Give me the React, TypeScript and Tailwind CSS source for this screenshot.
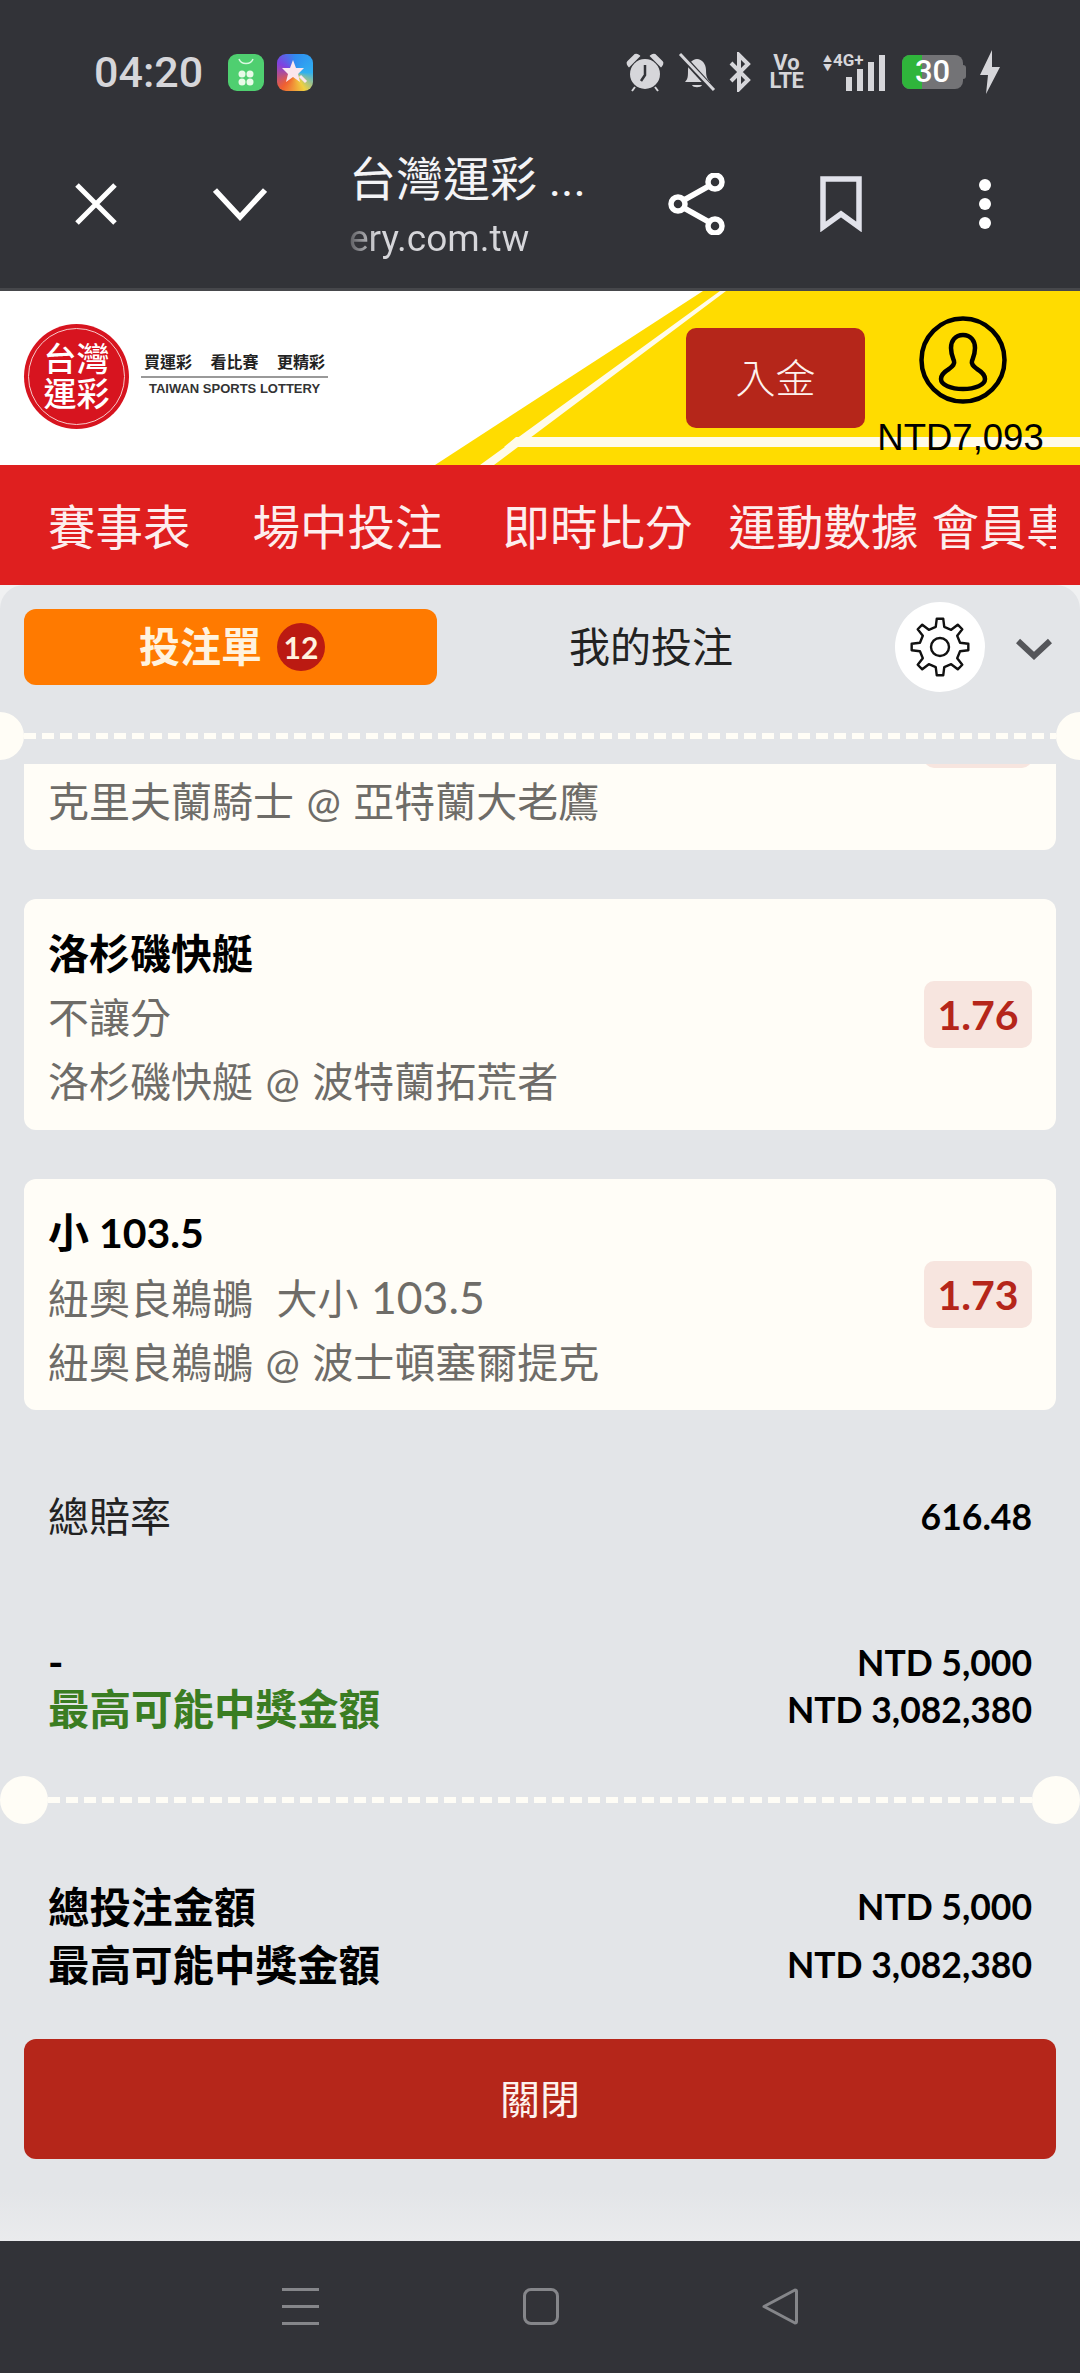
const bets = [
  { title: '克里夫蘭騎士', market: '不讓分', line: '', teams: '克里夫蘭騎士 @ 亞特蘭大老鷹', odds: '1.80' },
  { title: '洛杉磯快艇', market: '不讓分', line: '', teams: '洛杉磯快艇 @ 波特蘭拓荒者', odds: '1.76' },
  { title: '小 103.5', market: '紐奧良鵜鶘 大小', line: '103.5', teams: '紐奧良鵜鶘 @ 波士頓塞爾提克', odds: '1.73' }
];

// 8 teeth, round joins do the rest
const gearPath =
  Array.from({ length: 8 }, (_, i) =>
    [
      [i * 45 - 12, 20.5],
      [i * 45 - 6.5, 28.5],
      [i * 45 + 6.5, 28.5],
      [i * 45 + 12, 20.5]
    ]
      .map(([a, r]) => `${(r * Math.sin((a * Math.PI) / 180)).toFixed(2)} ${(-r * Math.cos((a * Math.PI) / 180)).toFixed(2)}`)
      .join(' L ')
  )
    .map((part, i) => (i === 0 ? `M ${part}` : `L ${part}`))
    .join(' ') + ' Z';

function StatusIcons() {
  return (
    <div className="ml-auto flex items-center text-[#d6d6da]">
      <svg width="38" height="40" viewBox="0 0 38 40">
        <circle cx="19" cy="22" r="15" fill="#d6d6da" />
        <path d="M19 13v10l-4 6" fill="none" stroke="#323338" strokeWidth="2.5" />
        <path d="M2 10 9 3c2-1 3 0 4 1L3 14c-1-1-2-3-1-4ZM36 10l-7-7c-2-1-3 0-4 1l10 10c1-1 2-3 1-4ZM9 35l-3 4M29 35l3 4" fill="#d6d6da" stroke="#d6d6da" strokeWidth="2" />
      </svg>
      <svg width="38" height="40" viewBox="0 0 38 40" className="ml-[14px]">
        <path d="M7 30c3-3 3-6 3-12 0-6 4-11 9-11s9 5 9 11c0 6 1 9 4 12Z" fill="#d6d6da" />
        <path d="M14 33c1 3 9 3 10 0Z" fill="#d6d6da" />
        <path d="M3 3 35 38" stroke="#323338" strokeWidth="6" />
        <path d="M2 2 36 38" stroke="#d6d6da" strokeWidth="3" />
      </svg>
      <svg width="24" height="40" viewBox="0 0 24 40" className="ml-[12px]">
        <path d="M3 11 20 28 11 37V3l9 9L3 29" fill="none" stroke="#d6d6da" strokeWidth="4" />
      </svg>
      <div className="ml-[18px] flex w-[33px] flex-col items-center font-['Roboto',sans-serif] text-[22px] leading-[18px] font-bold">
        <span>Vo</span>
        <span className="tracking-[-0.5px]">LTE</span>
      </div>
      <div className="relative ml-[20px] h-[38px] w-[62px]">
        <span className="absolute top-[-3px] left-[10px] font-['Roboto',sans-serif] text-[17px] leading-[20px] font-bold">4G+</span>
        <span className="absolute top-[1px] left-0 text-[9px] leading-[9px]">▲</span>
        <span className="absolute top-[10px] left-0 text-[9px] leading-[9px]">▼</span>
        <div className="absolute right-0 bottom-0 flex items-end gap-[5px]">
          <div className="h-[14px] w-[6px] bg-[#d6d6da]" />
          <div className="h-[22px] w-[6px] bg-[#d6d6da]" />
          <div className="h-[29px] w-[6px] bg-[#d6d6da]" />
          <div className="h-[36px] w-[6px] bg-[#d6d6da]" />
        </div>
      </div>
      <div className="relative ml-[17px] flex h-[34px] w-[61px] items-center justify-center overflow-hidden rounded-[8px] bg-[#737376]">
        <div className="absolute inset-y-0 left-0 w-[20px] bg-[#2fb53b]" />
        <span className="relative font-['Roboto',sans-serif] text-[31px] leading-[34px] font-medium text-white">30</span>
      </div>
      <div className="h-[14px] w-[3px] rounded-r bg-[#737376]" />
      <svg width="22" height="44" viewBox="0 0 22 44" className="mr-[79px] ml-[13px]">
        <path d="M13 0 1 25h8L7 44l14-27h-8Z" fill="#d6d6da" />
      </svg>
    </div>
  );
}

function BannerArt() {
  return (
    <svg className="absolute inset-0" width="1080" height="174" viewBox="0 0 1080 174">
      <path d="M703 0H1080V174H435Z" fill="#ffdc00" />
      <path d="M720 0H726L494 174H480ZM516 146H1080V156H504Z" fill="#fffbea" />
    </svg>
  );
}

function Logo() {
  return (
    <div className="relative mb-[4px] ml-[24px] flex h-[105px] w-[105px] shrink-0 items-center justify-center rounded-full bg-[#d7141f]">
      <div className="absolute inset-[4px] rounded-full border border-[#f7c9c9]" />
      <div className="grid grid-cols-2 text-[33px] leading-[35px] font-medium text-white">
        <span>台</span>
        <span>灣</span>
        <span>運</span>
        <span>彩</span>
      </div>
    </div>
  );
}

function Dashed({ inset }: { inset: boolean }) {
  return (
    <div className="relative flex h-[48px] items-center">
      <div className={inset ? 'absolute left-0 h-[48px] w-[48px] rounded-full bg-[#fffdf6]' : 'absolute left-[-24px] h-[48px] w-[48px] rounded-full bg-[#fffdf6]'} />
      <div className={inset ? 'absolute right-0 h-[48px] w-[48px] rounded-full bg-[#fffdf6]' : 'absolute right-[-24px] h-[48px] w-[48px] rounded-full bg-[#fffdf6]'} />
      <div className={inset ? 'mx-[48px] h-[6px] w-full bg-[repeating-linear-gradient(90deg,#fffdf6_0,#fffdf6_12px,transparent_12px,transparent_18px)]' : 'mx-[24px] h-[6px] w-full bg-[repeating-linear-gradient(90deg,#fffdf6_0,#fffdf6_12px,transparent_12px,transparent_18px)]'} />
    </div>
  );
}

function BetCard({ title, market, line, teams, odds }: { title: string; market: string; line: string; teams: string; odds: string }) {
  return (
    <div className="flex h-[231px] shrink-0 items-center justify-between rounded-[12px] bg-[#fffdf7] pr-[24px] pl-[24px]">
      <div className="flex flex-col pt-[6px] text-[41px] leading-[64px] text-[#6e6c68]">
        <span className="font-bold text-black">{title}</span>
        <span className="[word-spacing:13px]">
          {market} {line && <span className="-ml-[11px] text-[44.5px]">{line}</span>}
        </span>
        <span className="[word-spacing:2px]">{teams}</span>
      </div>
      <div className="flex h-[67px] w-[108px] items-center justify-center rounded-[10px] bg-[#f7e5df] text-[41px] font-bold text-[#b5261a]">{odds}</div>
    </div>
  );
}

function AmountRow({ label, value, labelClass, rowClass }: { label: string; value: string; labelClass: string; rowClass: string }) {
  return (
    <div className={`flex items-center justify-between px-[48px] ${rowClass}`}>
      <span className={`${labelClass}`}>{label}</span>
      <span className="text-[35.5px] font-bold text-black">{value}</span>
    </div>
  );
}

export default function App() {
  return (
    <div className="flex h-[2373px] w-[1080px] flex-col overflow-hidden bg-[#f0f1f2] font-['Lato','Noto_Sans_CJK_TC',sans-serif]">
      <div className="flex h-[120px] items-center bg-[#323338] pt-[24px] pl-[94px]">
        <span className="font-['Roboto',sans-serif] text-[43px] font-medium text-[#d6d6da]">04:20</span>
        <svg width="36" height="37" viewBox="0 0 36 37" className="ml-[25px]">
          <rect width="36" height="37" rx="9" fill="#4fcf70" />
          <path d="M11 5c2 6 12 6 14 0" fill="none" stroke="#d8f8e0" strokeWidth="1.5" />
          <g fill="#e8fbe8">
            <circle cx="14" cy="20" r="3.5" />
            <circle cx="22" cy="20" r="3.5" />
            <circle cx="14" cy="28" r="3.5" />
            <circle cx="22" cy="28" r="3.5" />
          </g>
        </svg>
        <div className="ml-[13px] flex h-[37px] w-[36px] items-center justify-center rounded-[9px] bg-[conic-gradient(#2f8cf0,#30b0f0_90deg,#f0d040_150deg,#f06030_220deg,#8040e0_300deg,#2f8cf0)]">
          <svg width="30" height="30" viewBox="0 0 30 30">
            <path d="M13 3l3 8 8 0-6 6 2 8-7-5-7 5 2-8-6-6 8 0Z" fill="#fbe6ee" />
            <path d="M20 19l6 6" stroke="#fbe6ee" strokeWidth="3" />
          </svg>
        </div>
        <StatusIcons />
      </div>

      <div className="flex h-[168px] items-center bg-[#323338] pl-[75px] text-white">
        <svg width="42" height="42" viewBox="0 0 42 42">
          <path d="M2 2 40 40M40 2 2 40" stroke="#fff" strokeWidth="5" />
        </svg>
        <svg width="54" height="34" viewBox="0 0 54 34" className="ml-[96px]">
          <path d="M2 3 27 30 52 3" fill="none" stroke="#fff" strokeWidth="5.5" />
        </svg>
        <div className="ml-[82px] flex w-[293px] flex-col">
          <span className="pt-[2px] font-['Roboto','Noto_Sans_CJK_TC',sans-serif] text-[47px] leading-[68px] whitespace-nowrap text-[#f4f4f6]">台灣運彩 ...</span>
          <span className="bg-[linear-gradient(90deg,#5b5c60_0,#d6d6da_28px)] bg-clip-text font-['Roboto',sans-serif] text-[37px] leading-[50px] text-transparent">ery.com.tw</span>
        </div>
        <svg width="58" height="62" viewBox="0 0 58 62" className="ml-[26px]">
          <g fill="none" stroke="#fff" strokeWidth="5.5">
            <circle cx="10" cy="31" r="7" />
            <circle cx="47" cy="9" r="7" />
            <circle cx="47" cy="53" r="7" />
            <path d="M16 27 41 13M16 35 41 49" />
          </g>
        </svg>
        <svg width="44" height="56" viewBox="0 0 44 56" className="ml-[93px]">
          <path d="M4 3H40V51L22 38 4 51Z" fill="none" stroke="#e1e2ea" strokeWidth="5.5" />
        </svg>
        <div className="ml-[116px] flex flex-col gap-[7px]">
          <div className="h-[12px] w-[12px] rounded-full bg-white" />
          <div className="h-[12px] w-[12px] rounded-full bg-white" />
          <div className="h-[12px] w-[12px] rounded-full bg-white" />
        </div>
      </div>
      <div className="h-[3px] bg-[#46474b]" />

      <div className="relative flex h-[174px] items-center bg-white">
        <BannerArt />
        <div className="relative flex w-full items-center">
          <Logo />
          <div className="mb-[8px] ml-[12px] flex w-[187px] flex-col items-center">
            <div className="flex w-[181px] justify-between text-[16px] leading-[22px] font-bold text-[#222]">
              <span>買運彩</span>
              <span>看比賽</span>
              <span>更精彩</span>
            </div>
            <div className="mt-[3px] h-[2px] w-full bg-[#999]" />
            <span className="mt-[2px] font-['Liberation_Sans',sans-serif] text-[13px] leading-[18px] font-bold whitespace-nowrap text-[#333]">TAIWAN SPORTS LOTTERY</span>
          </div>
          <div className="ml-auto flex h-[100px] w-[179px] items-center justify-center rounded-[10px] bg-[#b5261a] text-[40px] font-light text-[#fdf2ee]">入金</div>
          <div className="mr-[37px] ml-[13px] flex w-[165px] flex-col items-center pt-[19px]">
            <svg width="88" height="88" viewBox="0 0 88 88" className="ml-[5px]">
              <circle cx="44" cy="44" r="41.5" fill="none" stroke="#000" strokeWidth="4.5" />
              <path d="M44 19c-8 0-12 6-12 13 0 6 2 10 3 13 1 3-1 5-5 8-5 3-8 6-8 10 0 6 10 10 22 10s22-4 22-10c0-4-3-7-8-10-4-3-6-5-5-8 1-3 3-7 3-13 0-7-4-13-12-13Z" fill="none" stroke="#000" strokeWidth="4.5" />
            </svg>
            <span className="mt-[12px] font-['Liberation_Sans',sans-serif] text-[36.5px] leading-[44px] whitespace-nowrap text-black">NTD7,093</span>
          </div>
        </div>
      </div>

      <div className="flex h-[120px] items-center bg-[#df1f1f] pt-[3px] pr-[24px] pl-[48px] text-[47.5px] whitespace-nowrap text-[#fdeeee]">
        <div className="flex w-full overflow-hidden">
          <span>賽事表</span>
          <span className="ml-[62px]">場中投注</span>
          <span className="ml-[60px]">即時比分</span>
          <span className="ml-[36px]">運動數據</span>
          <span className="ml-[13px]">會員專區</span>
        </div>
      </div>

      <div className="flex flex-1 flex-col overflow-hidden rounded-t-[24px] bg-[linear-gradient(#e3e5e8_97%,#eaebed)] pt-[24px]">
        <div className="flex h-[76px] items-center pl-[24px]">
          <div className="flex h-[76px] w-[413px] items-center justify-center rounded-[12px] bg-[#ff7a00] pl-[3px]">
            <span className="text-[41px] font-bold text-[#fff3df]">投注單</span>
            <div className="ml-[15px] flex h-[48px] w-[48px] items-center justify-center rounded-full bg-[#bb1a12] text-[30px] font-bold text-[#fff3df]">12</div>
          </div>
          <div className="flex w-[428px] justify-center text-[41px] text-[#222]">我的投注</div>
          <div className="ml-[30px] flex h-[90px] w-[90px] shrink-0 items-center justify-center rounded-full bg-white">
            <svg width="66" height="66" viewBox="-33 -33 66 66">
              <path d={gearPath} fill="none" stroke="#111" strokeWidth="2.4" strokeLinejoin="round" />
              <circle r="9" fill="none" stroke="#111" strokeWidth="2.4" />
            </svg>
          </div>
          <svg width="36" height="24" viewBox="0 0 36 24" className="mt-[4px] ml-[31px]">
            <path d="M2 4 18 19 34 4" fill="none" stroke="#55565a" strokeWidth="6" />
          </svg>
        </div>

        <div className="mt-[27px]">
          <Dashed inset={false} />
        </div>

        <div className="mx-[24px] mt-[4px] overflow-hidden">
          <div className="-mt-[145px] flex flex-col gap-[49px]">
            {bets.map(bet => (
              <BetCard key={bet.title} {...bet} />
            ))}
          </div>
        </div>

        <AmountRow label="總賠率" value="616.48" labelClass="text-[41px] text-[#222]" rowClass="mt-[75px] h-[64px]" />

        <div className="mt-[90px]">
          <AmountRow label="-" value="NTD 5,000" labelClass="text-[41.5px] font-bold text-black" rowClass="h-[47px]" />
          <AmountRow label="最高可能中獎金額" value="NTD 3,082,380" labelClass="text-[41.5px] font-bold text-[#3a7d22]" rowClass="h-[47px]" />
        </div>

        <div className="mt-[43px]">
          <Dashed inset />
        </div>

        <div className="mt-[54px]">
          <AmountRow label="總投注金額" value="NTD 5,000" labelClass="text-[41.5px] font-bold text-black" rowClass="h-[58px]" />
          <AmountRow label="最高可能中獎金額" value="NTD 3,082,380" labelClass="text-[41.5px] font-bold text-black" rowClass="h-[58px]" />
        </div>

        <button className="mx-[24px] mt-[45px] flex h-[120px] shrink-0 items-center justify-center rounded-[12px] bg-[#b5261a] text-[40px] text-[#fdf2ee]">關閉</button>
      </div>

      <div className="flex h-[132px] items-start justify-center bg-[#323338] pt-[47px]">
        <div className="flex h-[37px] w-[37px] flex-col justify-between">
          <div className="h-[3px] bg-[#85868a]" />
          <div className="h-[3px] bg-[#85868a]" />
          <div className="h-[3px] bg-[#85868a]" />
        </div>
        <div className="ml-[204px] h-[37px] w-[36px] rounded-[8px] border-[3px] border-[#85868a]" />
        <svg width="36" height="37" viewBox="0 0 36 37" className="ml-[203px]">
          <path d="M2 18.5 33 2c1 0 1.500 0.500 1.500 1.500v30c0 1-0.500 1.500-1.500 1.500Z" fill="none" stroke="#85868a" strokeWidth="3" strokeLinejoin="round" />
        </svg>
      </div>
    </div>
  );
}
